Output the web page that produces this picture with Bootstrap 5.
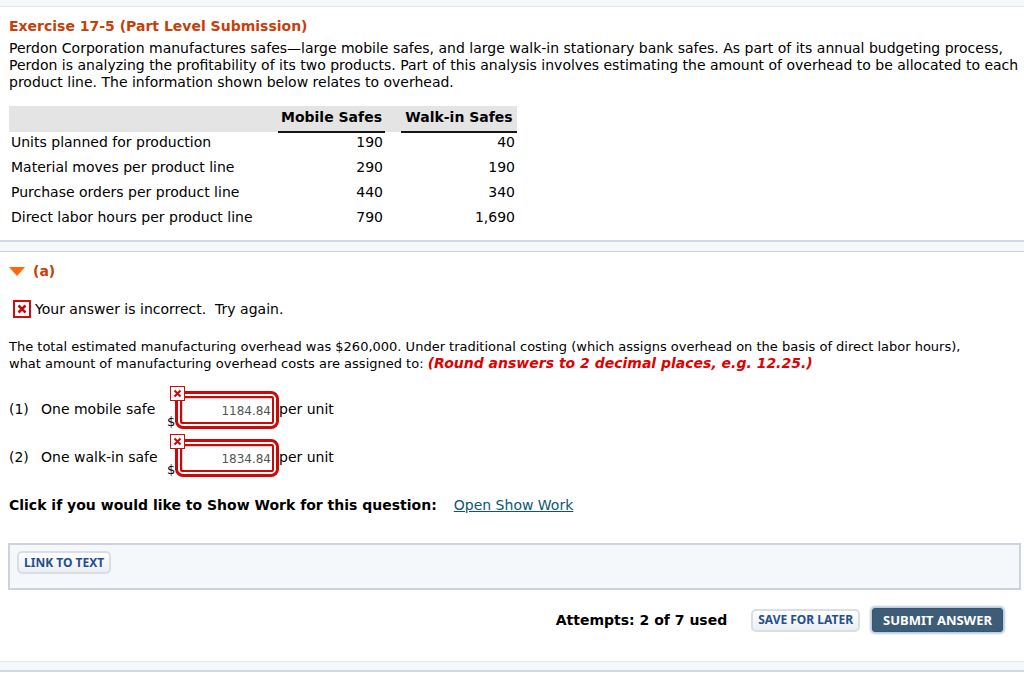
<!DOCTYPE html>
<html lang="en">
<head>
<meta charset="utf-8">
<meta name="viewport" content="width=device-width, initial-scale=1">
<title>Exercise 17-5</title>
<link href="https://cdn.jsdelivr.net/npm/bootstrap@5.3.0/dist/css/bootstrap.min.css" rel="stylesheet">
<style>
body { font-family: "DejaVu Sans", Verdana, sans-serif; font-size: 14px; line-height: 17px; color: #000; background: #fff; }
.strip { height: 12px; background: #f4f8fb; border-top: 2px solid #d3d8e4; border-bottom: 1px solid #cccfdd; }
.strip-top { height: 7px; border-top: 0; border-bottom-color: #dfe8ec; }
.strip-end { height: 11px; border-top: 1px solid #e4e9ed; border-bottom: 2px solid #d0d6e2; }
.section { padding-left: 9px; padding-right: 3px; padding-bottom: 7px; }
.heading { color: #c7400a; font-size: 14px; line-height: 17px; font-weight: 700; padding-top: 11px; }
.intro { margin: 5px 0 0; }
.overhead { margin-top: 15px; border-collapse: collapse; }
.overhead th, .overhead td { padding: 1px 2px 7px; height: 25px; text-align: right; white-space: nowrap; }
.overhead tbody th { text-align: left; font-weight: 400; width: 269px; }
.overhead thead { background: #e4e4e4; }
.overhead thead th { text-align: center; padding: 3px 2px 5px; }
.overhead .gap-col { width: 16px; padding: 0; }
.overhead .ruled { border-bottom: 2px solid #151515; }
.overhead .mobile-col { width: 107px; }
.overhead .walk-col { width: 116px; }
.question { font-size: 13px; }
.hint { color: #e00000; font-size: 14px; }
.answers { margin-top: 15px; }
.answer { height: 48px; }
.answer label, .unit { padding-top: 14px; }
.answer-no { width: 32px; }
.answer-name { width: 126px; }
.currency { width: 8px; padding-top: 26px; font-size: 13px; }
.amount { width: 104px; margin-top: 4px; border: 3px solid #cc0808; border-radius: 8px; padding: 2px; background: #fff; }
.amount input { height: 28px; border: 2px solid #cc0808; border-radius: 2px; padding: 1px 1px 0; font-size: 12px; color: #555; text-align: right; background: #fff; box-shadow: inset 1px 1px 1px #ccc; }
.amount svg { position: absolute; left: -8px; top: -8px; }
.work { margin: 14px 0 29px; }
.work a { color: #0c5674; margin-left: 17px; }
.resources { background: #f4f8fb; border: 2px solid #cdd3de; height: 47px; padding: 6px 7px; margin-left: -1px; }
.btn-plain, .btn-main { line-height: 14px; font-weight: 700; font-family: "Noto Sans", sans-serif; white-space: nowrap; }
.btn-plain { height: 23px; padding: 2px 5px; color: #254f8b; border: 2px solid #d8dee8; border-radius: 5px; background: linear-gradient(#fff, #eceef3); font-size: 12px; }
.btn-main { height: 24px; padding: 4px 10px; border: 1px solid #355672; border-radius: 3px; color: #fff; background: #3d5c77; box-shadow: 0 0 2px 2px #bccbdd; font-size: 13px; }
.actions { padding: 18px 18px 22px 0; }
.attempts { margin-right: 24px; }
</style>
</head>
<body>
<div class="strip strip-top"></div>
<main>
<section class="section">
  <h1 class="heading mb-0">Exercise 17-5 (Part Level Submission)</h1>
  <p class="intro">Perdon Corporation manufactures safes—large mobile safes, and large walk-in stationary bank safes. As part of its annual budgeting process, Perdon is analyzing the profitability of its two products. Part of this analysis involves estimating the amount of overhead to be allocated to each product line. The information shown below relates to overhead.</p>
  <table class="overhead">
    <thead><tr><td></td><th class="ruled mobile-col" scope="col">Mobile Safes</th><td class="gap-col"></td><th class="ruled walk-col" scope="col">Walk-in Safes</th></tr></thead>
    <tbody>
      <tr><th scope="row">Units planned for production</th><td>190</td><td class="gap-col"></td><td>40</td></tr>
      <tr><th scope="row">Material moves per product line</th><td>290</td><td class="gap-col"></td><td>190</td></tr>
      <tr><th scope="row">Purchase orders per product line</th><td>440</td><td class="gap-col"></td><td>340</td></tr>
      <tr><th scope="row">Direct labor hours per product line</th><td>790</td><td class="gap-col"></td><td>1,690</td></tr>
    </tbody>
  </table>
</section>
<div class="strip"></div>
<section class="section">
  <h2 class="heading d-flex align-items-center mb-0"><svg class="me-2" width="16" height="9" aria-hidden="true"><path d="M0 0H16L8 9Z" fill="#ff6808"/></svg>(a)</h2>
  <div class="d-flex align-items-center ps-1 mt-3 pt-1">
    <svg width="18" height="18" class="me-1" role="img" aria-label="Incorrect"><rect x="1" y="1" width="16" height="16" fill="#fff" stroke="#d00c10" stroke-width="2"/><path d="M5.500 5.500l7 7M12.500 5.500l-7 7" stroke="#cc0808" stroke-width="2.500"/></svg>
    <span>Your answer is incorrect.&nbsp; Try again.</span>
  </div>
  <p class="question mb-0 mt-3 pt-1">The total estimated manufacturing overhead was $260,000. Under traditional costing (which assigns overhead on the basis of direct labor hours),<br>what amount of manufacturing overhead costs are assigned to: <strong class="hint fst-italic">(Round answers to 2 decimal places, e.g. 12.25.)</strong></p>
  <div class="answers">
    <div class="answer d-flex align-items-start">
      <label class="d-flex" for="mobile"><span class="answer-no">(1)</span><span class="answer-name">One mobile safe</span></label>
      <span class="currency">$</span>
      <div class="amount position-relative"><input class="d-block w-100" type="text" id="mobile" value="1184.84"><svg width="15" height="15" aria-hidden="true"><rect x=".5" y=".5" width="14" height="14" fill="#fff" stroke="#d00c10"/><path d="M4.500 4.500l6 6M10.500 4.500l-6 6" stroke="#cc0808" stroke-width="2"/></svg></div>
      <span class="unit">per unit</span>
    </div>
    <div class="answer d-flex align-items-start">
      <label class="d-flex" for="walkin"><span class="answer-no">(2)</span><span class="answer-name">One walk-in safe</span></label>
      <span class="currency">$</span>
      <div class="amount position-relative"><input class="d-block w-100" type="text" id="walkin" value="1834.84"><svg width="15" height="15" aria-hidden="true"><rect x=".5" y=".5" width="14" height="14" fill="#fff" stroke="#d00c10"/><path d="M4.500 4.500l6 6M10.500 4.500l-6 6" stroke="#cc0808" stroke-width="2"/></svg></div>
      <span class="unit">per unit</span>
    </div>
  </div>
  <p class="work"><strong>Click if you would like to Show Work for this question:</strong><a href="#">Open Show Work</a></p>
  <div class="resources"><button class="btn btn-plain" type="button">LINK TO TEXT</button></div>
  <div class="actions d-flex justify-content-end align-items-center">
    <strong class="attempts">Attempts: 2 of 7 used</strong>
    <button class="btn btn-plain me-2" type="button">SAVE FOR LATER</button>
    <button class="btn btn-main ms-1" type="submit">SUBMIT ANSWER</button>
  </div>
</section>
</main>
<div class="strip strip-end"></div>
<script src="https://cdn.jsdelivr.net/npm/bootstrap@5.3.0/dist/js/bootstrap.bundle.min.js"></script>
</body>
</html>
